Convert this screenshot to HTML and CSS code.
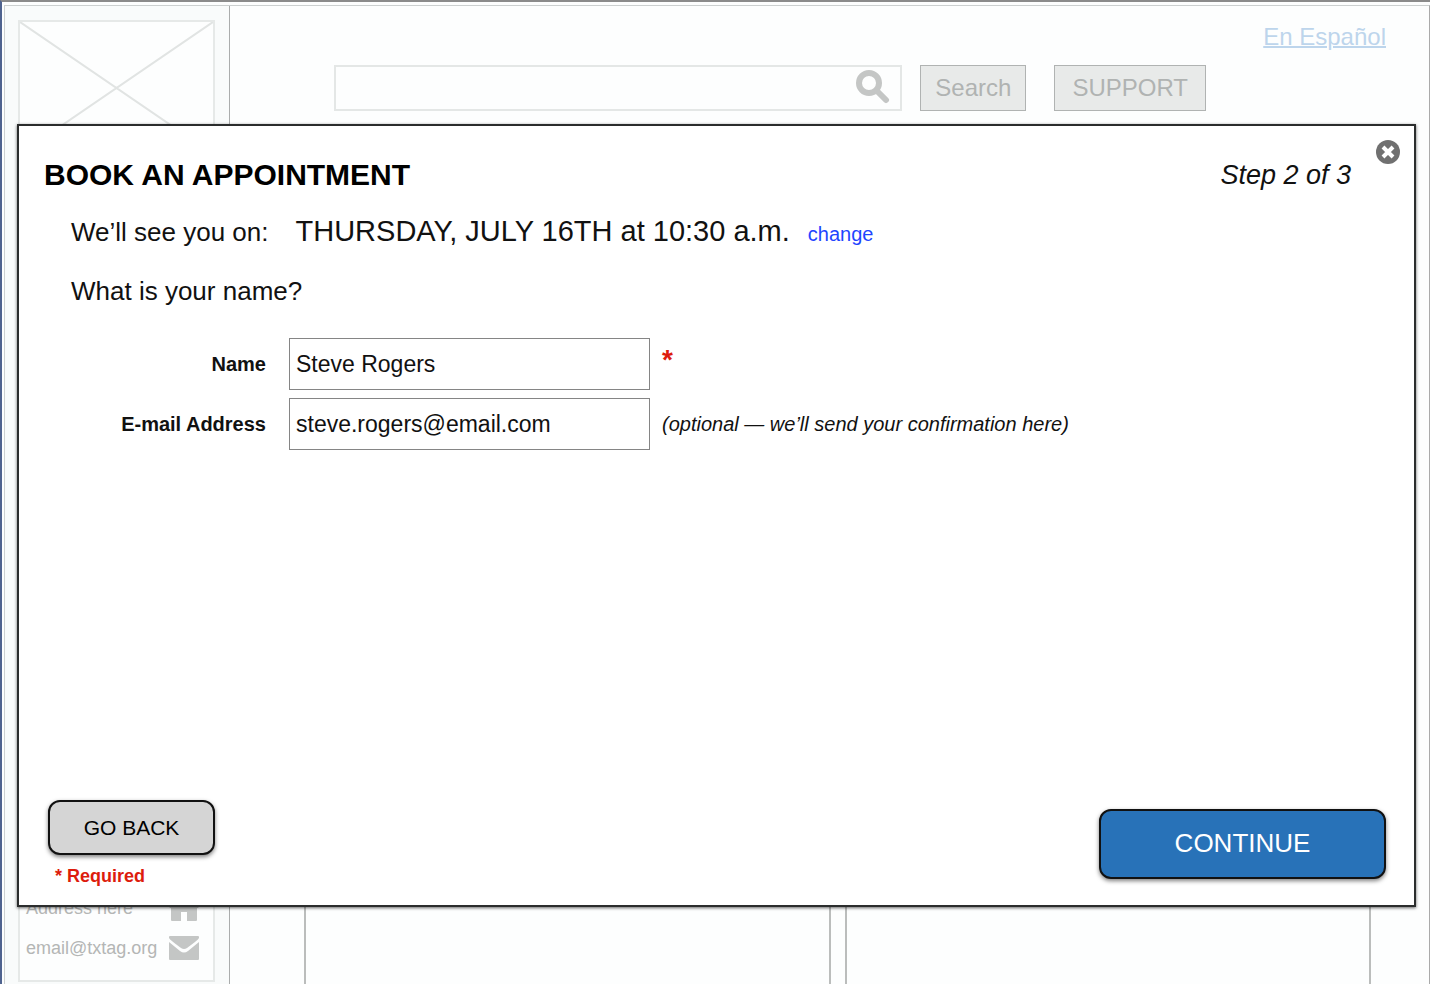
FILE: index.html
```html
<!DOCTYPE html>
<html lang="en">
<head>
    <meta charset="UTF-8">
    <meta name="viewport" content="width=device-width, initial-scale=1.0">
    <title>Book an Appointment</title>
    <link rel="stylesheet" href="styles.css">
</head>
<body>
    <div class="page">
        <aside class="sidebar">
            <div class="sidebar-box">
                <svg class="logo" viewBox="0 0 194 132" preserveAspectRatio="none" aria-hidden="true">
                    <path d="M0 0L194 132M194 0L0 132"/>
                </svg>
                <div class="contact">
                    <div class="contact-row">
                        <span>Address here</span>
                        <svg width="30" height="26" viewBox="0 0 30 26" aria-hidden="true">
                            <path d="M15 0L30 13H28V25Q28 26 27 26H18V17H12V26H3Q2 26 2 25V13H0Z"/>
                        </svg>
                    </div>
                    <div class="contact-row">
                        <span>email@txtag.org</span>
                        <svg width="30" height="24" viewBox="0 0 30 24" aria-hidden="true">
                            <path d="M1 0H29Q30 0 30 1V2Q29 4 18 12Q15 14 12 12Q1 4 0 2V1Q0 0 1 0Z"/>
                            <path d="M0 6L11 15Q15 18 19 15L30 6V23Q30 24 29 24H1Q0 24 0 23Z"/>
                        </svg>
                    </div>
                </div>
            </div>
        </aside>

        <main class="main">
            <div class="lang"><a href="#">En Español</a></div>
            <form class="toolbar">
                <div class="search-box">
                    <input class="search-input" type="text" aria-label="Search">
                    <svg width="34" height="36" viewBox="0 0 34 36" aria-hidden="true">
                        <circle cx="13" cy="13" r="10"/>
                        <path d="M21 21L30 30"/>
                    </svg>
                </div>
                <button class="tool-button search-button" type="button">Search</button>
                <button class="tool-button" type="button">SUPPORT</button>
            </form>
            <div class="panels">
                <section class="panel"></section>
                <section class="panel"></section>
            </div>
        </main>
    </div>

    <div class="modal" role="dialog" aria-labelledby="modal-title">
        <button class="close" type="button" aria-label="Close">
            <svg width="24" height="24" viewBox="0 0 24 24" aria-hidden="true">
                <circle cx="12" cy="12" r="12"/>
                <path d="M7 7L17 17M17 7L7 17"/>
            </svg>
        </button>
        <div class="modal-header">
            <h1 id="modal-title">BOOK AN APPOINTMENT</h1>
            <span class="step">Step 2 of 3</span>
        </div>
        <div class="when">
            <span>We’ll see you on:</span>
            <span class="date">THURSDAY, JULY 16TH at 10:30 a.m.</span>
            <a class="change" href="#">change</a>
        </div>
        <p class="question">What is your name?</p>
        <form class="fields">
            <label for="name">Name</label>
            <input id="name" type="text" value="Steve Rogers" required>
            <span class="star">*</span>
            <label for="email">E-mail Address</label>
            <input id="email" type="email" value="steve.rogers@email.com">
            <span class="hint">(optional — we’ll send your confirmation here)</span>
        </form>
        <div class="modal-footer">
            <div class="footer-left">
                <button class="button back" type="button">GO BACK</button>
                <span class="required">* Required</span>
            </div>
            <button class="button continue" type="button">CONTINUE</button>
        </div>
    </div>
</body>
</html>
```
FILE: styles.css
```css
* {
    box-sizing: border-box;
}
body {
    margin: 0;
    font-family: "Liberation Sans", Arial, sans-serif;
    background: #fdfefe;
    color: #111;
    border-top: 2px solid #8b8b8b;
    border-left: 2px solid #4f638f;
    min-height: 100vh;
    display: flex;
}
button, input {
    font-family: inherit;
}

/* page behind the dialog */
.page {
    flex: 1;
    display: flex;
    margin: 3px 0 0 2px;
    border: 1px solid #ccd0d0;
    border-right-color: #aaa;
    border-bottom: none;
}
.sidebar {
    width: 225px;
    padding: 14px 14px 2px 13px;
    background: #f9fbfb;
    border-right: 1px solid #aaacac;
    display: flex;
}
.sidebar-box {
    flex: 1;
    display: flex;
    flex-direction: column;
    justify-content: space-between;
    background: #fdfefe;
    border: 2px solid #e6e9e8;
}
.logo {
    width: 100%;
    height: 132px;
    fill: none;
    stroke: #e1e4e3;
    stroke-width: 2;
}
.contact {
    padding: 0 14px 18px 6px;
    font-size: 18px;
    color: #b4b6b5;
}
.contact-row {
    display: flex;
    align-items: center;
    justify-content: space-between;
    height: 28px;
    margin-top: 12px;
}
.contact-row svg {
    flex: none;
    fill: #c4c6c5;
}
.main {
    flex: 1;
    display: flex;
    flex-direction: column;
}
.lang {
    padding: 17px 43px 0;
    text-align: right;
    font-size: 24px;
    line-height: 28px;
}
.lang a {
    color: #bdd5ec;
    text-decoration-thickness: 2px;
}
.toolbar {
    display: flex;
    margin: 14px 223px 0 104px;
}
.search-box {
    flex: 1;
    display: flex;
    align-items: center;
    height: 46px;
    padding-right: 10px;
    border: 2px solid #e4e7e6;
}
.search-box svg {
    flex: none;
    fill: none;
    stroke: #c4c6c5;
    stroke-width: 6;
    stroke-linecap: round;
}
.search-input {
    flex: 1;
    min-width: 0;
    height: 100%;
    padding: 0 8px;
    border: none;
    background: none;
    font-size: 24px;
}
.tool-button {
    height: 46px;
    padding: 0 17px;
    margin-left: 28px;
    background: #e8eae9;
    border: 1px solid #b0b3b2;
    color: #b0b3b2;
    font-size: 24px;
}
.search-button {
    padding: 0 14px;
    margin-left: 18px;
}
.panels {
    flex: 1;
    display: flex;
    gap: 14px;
    margin-top: 120px;
    padding: 0 58px 0 74px;
}
.panel {
    flex: 1;
    border: 2px solid #bbbdbc;
    border-bottom: none;
}

/* dialog */
.modal {
    position: absolute;
    top: 124px;
    right: 14px;
    bottom: 77px;
    left: 17px;
    display: flex;
    flex-direction: column;
    padding: 31px 28px 18px 25px;
    background: #fff;
    border: 2px solid #2b2d2d;
    box-shadow: 0 1px 3px rgba(0,0,0,0.6);
}
.close {
    position: absolute;
    top: 14px;
    right: 14px;
    width: 24px;
    height: 24px;
    padding: 0;
    border: none;
    background: none;
    cursor: pointer;
}
.close svg {
    display: block;
    fill: #707070;
    stroke-width: 4;
}
.close path {
    stroke: #fff;
}
.modal-header {
    display: flex;
    justify-content: space-between;
    align-items: center;
    padding-right: 35px;
}
h1 {
    margin: 0;
    font-size: 30px;
    line-height: 36px;
    color: #000;
}
.step {
    font-size: 27px;
    font-style: italic;
}
.when {
    display: flex;
    align-items: baseline;
    margin: 20px 0 0 27px;
    font-size: 26px;
    line-height: 36px;
}
.date {
    margin: 0 18px 0 27px;
    font-size: 29px;
}
.change {
    color: #1f45ff;
    font-size: 20px;
    text-decoration: none;
}
.question {
    margin: 21px 0 29px 27px;
    font-size: 26px;
    line-height: 36px;
}
.fields {
    display: grid;
    grid-template-columns: 233px 361px 1fr;
    align-items: center;
    gap: 8px 12px;
}
.fields label {
    padding-right: 11px;
    text-align: right;
    font-size: 20px;
    font-weight: bold;
}
.fields input {
    height: 52px;
    padding: 0 6px;
    border: 1px solid #858585;
    background: #fff;
    color: #111;
    font-size: 23px;
}
.star {
    align-self: start;
    padding-top: 6px;
    color: #dd1c0c;
    font-size: 28px;
    font-weight: bold;
}
.hint {
    font-size: 20px;
    font-style: italic;
}
.modal-footer {
    display: flex;
    justify-content: space-between;
    align-items: center;
    margin-top: auto;
    padding-left: 4px;
}
.footer-left {
    display: flex;
    flex-direction: column;
}
.button {
    border: 2px solid #111;
    border-radius: 12px;
    box-shadow: 0 2px 4px rgba(0,0,0,0.5);
    cursor: pointer;
}
.back {
    width: 167px;
    height: 55px;
    background: #d5d5d5;
    color: #000;
    font-size: 21px;
}
.continue {
    width: 287px;
    height: 70px;
    background: #2872b8;
    color: #fff;
    font-size: 26px;
}
.required {
    margin: 11px 0 0 7px;
    color: #dd1c0c;
    font-size: 18px;
    font-weight: bold;
}
```
